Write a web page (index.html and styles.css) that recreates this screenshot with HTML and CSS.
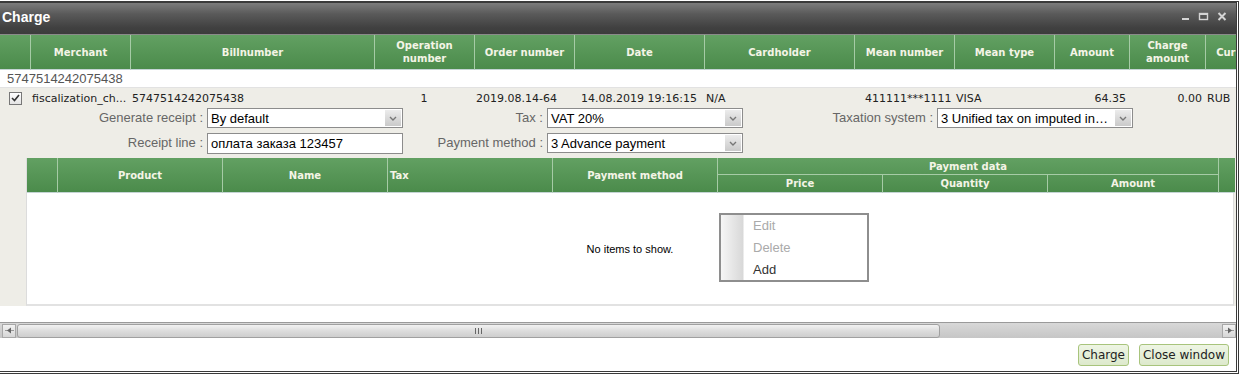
FILE: index.html
```html
<!DOCTYPE html>
<html lang="en">
<head>
    <meta charset="UTF-8">
    <meta name="viewport" content="width=device-width, initial-scale=1.0">
    <title>Charge</title>
    <link rel="stylesheet" href="styles.css">
</head>
<body>
<div class="window">
    <div class="titlebar">
        <span class="title">Charge</span>
        <div class="tools">
            <svg width="9" height="9" viewBox="0 0 9 9"><rect x="1" y="6" width="7" height="2" fill="#d4d4d4"/></svg>
            <svg width="11" height="9" viewBox="0 0 11 9"><rect x="1.5" y="1.5" width="8" height="6" fill="none" stroke="#d4d4d4" stroke-width="1.4"/><rect x="1" y="1" width="9" height="2" fill="#d4d4d4"/></svg>
            <svg width="10" height="9" viewBox="0 0 10 9"><path d="M1.5 1 L8.5 8 M8.5 1 L1.5 8" stroke="#d4d4d4" stroke-width="2"/></svg>
        </div>
    </div>

    <div class="grid-wrap">
        <table class="grid">
            <colgroup>
                <col class="w30"><col class="w100"><col class="w244"><col class="w100"><col class="w100"><col class="w130">
                <col class="w150"><col class="w100"><col class="w100"><col class="w75"><col class="w76"><col class="w72">
            </colgroup>
            <thead>
                <tr>
                    <th class="first"></th>
                    <th>Merchant</th>
                    <th>Billnumber</th>
                    <th>Operation<br>number</th>
                    <th>Order number</th>
                    <th>Date</th>
                    <th>Cardholder</th>
                    <th>Mean number</th>
                    <th>Mean type</th>
                    <th>Amount</th>
                    <th>Charge<br>amount</th>
                    <th>Currency</th>
                </tr>
            </thead>
            <tbody>
                <tr class="group-row">
                    <td colspan="12">5747514242075438</td>
                </tr>
                <tr class="data-row">
                    <td><span class="checkbox"><svg width="9" height="8" viewBox="0 0 9 8"><path d="M1 4 L3.5 6.5 L8 1" fill="none" stroke="#333" stroke-width="1.6"/></svg></span></td>
                    <td>fiscalization_ch...</td>
                    <td>5747514242075438</td>
                    <td class="center">1</td>
                    <td>2019.08.14-64</td>
                    <td class="center">14.08.2019 19:16:15</td>
                    <td>N/A</td>
                    <td class="mean">411111***1111</td>
                    <td>VISA</td>
                    <td class="num">64.35</td>
                    <td class="num">0.00</td>
                    <td>RUB</td>
                </tr>
            </tbody>
        </table>
    </div>

    <div class="detail">
        <div class="form">
            <label class="lbl">Generate receipt :</label>
            <div class="combo"><span>By default</span><span class="arrow"><svg width="8" height="5" viewBox="0 0 8 5"><path d="M1 1 L4 4 L7 1" fill="none" stroke="#777" stroke-width="1.4"/></svg></span></div>
            <label class="lbl">Tax :</label>
            <div class="combo"><span>VAT 20%</span><span class="arrow"><svg width="8" height="5" viewBox="0 0 8 5"><path d="M1 1 L4 4 L7 1" fill="none" stroke="#777" stroke-width="1.4"/></svg></span></div>
            <label class="lbl">Taxation system :</label>
            <div class="combo"><span>3 Unified tax on imputed in…</span><span class="arrow"><svg width="8" height="5" viewBox="0 0 8 5"><path d="M1 1 L4 4 L7 1" fill="none" stroke="#777" stroke-width="1.4"/></svg></span></div>

            <label class="lbl">Receipt line :</label>
            <input class="text" type="text" value="оплата заказа 123457">
            <label class="lbl">Payment method :</label>
            <div class="combo"><span>3 Advance payment</span><span class="arrow"><svg width="8" height="5" viewBox="0 0 8 5"><path d="M1 1 L4 4 L7 1" fill="none" stroke="#777" stroke-width="1.4"/></svg></span></div>
        </div>

        <div class="items">
            <table class="grid items-grid">
                <colgroup>
                    <col class="w30"><col class="w165"><col class="w165"><col class="w165"><col class="w165">
                    <col class="w165"><col class="w165"><col class="w171"><col class="w17">
                </colgroup>
                <thead>
                    <tr>
                        <th class="first" rowspan="2"></th>
                        <th rowspan="2">Product</th>
                        <th rowspan="2">Name</th>
                        <th rowspan="2" class="left">Tax</th>
                        <th rowspan="2">Payment method</th>
                        <th colspan="3" class="group">Payment data</th>
                        <th rowspan="2"></th>
                    </tr>
                    <tr>
                        <th class="sub">Price</th>
                        <th class="sub">Quantity</th>
                        <th class="sub">Amount</th>
                    </tr>
                </thead>
            </table>
            <div class="items-body">
                <span class="empty">No items to show.</span>
                <ul class="menu">
                    <li class="disabled">Edit</li>
                    <li class="disabled">Delete</li>
                    <li>Add</li>
                </ul>
            </div>
        </div>
    </div>

    <div class="gap"></div>

    <div class="hscroll">
        <span class="sbtn">
            <svg width="11" height="9" viewBox="0 0 11 9"><path d="M1 4.5 H10" stroke="#999"/><path d="M3 4.5 L7 1.5 L7 7.5 Z" fill="#666"/></svg>
        </span>
        <div class="thumb"><span class="grip"></span></div>
        <div class="track"></div>
        <span class="sbtn">
            <svg width="11" height="9" viewBox="0 0 11 9"><path d="M1 4.5 H10" stroke="#999"/><path d="M8 4.5 L4 1.5 L4 7.5 Z" fill="#666"/></svg>
        </span>
    </div>

    <div class="footer">
        <button class="btn">Charge</button>
        <button class="btn">Close window</button>
    </div>
</div>
</body>
</html>
```

FILE: styles.css
```css
body {
    margin: 0;
    padding-top: 1px;
    background: #fff;
    font-family: "DejaVu Sans", Verdana, sans-serif;
    font-size: 11px;
    color: #222;
}

.window {
    width: 1236px;
    border-top: 2px solid #3a3a3a;
    border-right: 3px double #3a3a3a;
    border-bottom: 3px double #3a3a3a;
    background: #fff;
    overflow: hidden;
}

/* title bar */
.titlebar {
    height: 32px;
    display: flex;
    align-items: center;
    justify-content: space-between;
    background: linear-gradient(#7c7c7c, #5a5a5a 35%, #404040 80%, #3c3c3c);
    border-bottom: 1px solid #8a8a8a;
    box-sizing: border-box;
}

.title {
    padding-left: 2px;
    padding-bottom: 3px;
    font-family: "Liberation Sans", Arial, sans-serif;
    font-weight: bold;
    font-size: 14px;
    color: #fff;
}

.tools {
    display: flex;
    align-items: center;
    gap: 8px;
    padding-right: 9px;
    padding-bottom: 4px;
}

/* grids */
.grid-wrap {
    width: 1236px;
    overflow: hidden;
}

.grid {
    table-layout: fixed;
    border-collapse: separate;
    border-spacing: 0;
    width: 1277px;
}

.w17 { width: 17px; }
.w30 { width: 30px; }
.w72 { width: 72px; }
.w75 { width: 75px; }
.w76 { width: 76px; }
.w100 { width: 100px; }
.w130 { width: 130px; }
.w150 { width: 150px; }
.w165 { width: 165px; }
.w171 { width: 171px; }
.w244 { width: 244px; }

.grid th {
    height: 35px;
    padding: 0 2px;
    background: linear-gradient(#62a062, #4b8b4b);
    border-left: 1px solid #a6cba6;
    border-bottom: 1px solid #c4d4d4;
    color: #f4f4e6;
    font-size: 10px;
    font-weight: bold;
    line-height: 13px;
    text-align: center;
    white-space: nowrap;
    overflow: hidden;
    box-sizing: border-box;
}

.grid th.first {
    border-left: none;
}

.grid th.left {
    text-align: left;
}

.group-row td {
    height: 18px;
    padding: 0 0 0 7px;
    font-family: "Liberation Sans", Arial, sans-serif;
    font-size: 13px;
    color: #555;
    border-bottom: 1px solid #e2e2e2;
    box-sizing: border-box;
}

.data-row td {
    height: 19px;
    padding: 1px 2px 0;
    background: #eeede7;
    white-space: nowrap;
    overflow: hidden;
    box-sizing: border-box;
}

.data-row .center { text-align: center; }
.data-row .num { text-align: right; padding-right: 3px; }
.data-row .mean { padding-left: 11px; }

.checkbox {
    display: flex;
    align-items: center;
    justify-content: center;
    width: 11px;
    height: 11px;
    margin-left: 7px;
    border: 1px solid #777;
    background: linear-gradient(#fff, #e4e4e4);
}

/* detail form */
.detail {
    background: #eeede7;
    padding-bottom: 0;
}

.form {
    display: grid;
    grid-template-columns: 207px 196px 144px 196px 194px 196px;
    grid-template-rows: 21px 21px;
    row-gap: 4px;
    padding: 1px 0 4px;
    font-family: "Liberation Sans", Arial, sans-serif;
    font-size: 13px;
}

.lbl {
    padding-right: 4px;
    line-height: 20px;
    text-align: right;
    color: #666;
}

.combo {
    display: flex;
    align-items: center;
    justify-content: space-between;
    height: 20px;
    border: 1px solid #8c8c8c;
    background: #fff;
    box-sizing: border-box;
    color: #000;
}

.combo span:first-child {
    padding-left: 3px;
    white-space: nowrap;
}

.arrow {
    display: flex;
    align-items: center;
    justify-content: center;
    width: 16px;
    height: 16px;
    margin-right: 1px;
    background: linear-gradient(#ececec, #cacaca);
}

.text {
    height: 21px;
    margin: 0;
    padding: 0 3px;
    border: 1px solid #8c8c8c;
    box-sizing: border-box;
    font-family: "Liberation Sans", Arial, sans-serif;
    font-size: 13px;
    color: #000;
    outline: none;
}

/* item grid */
.items {
    margin-left: 26px;
    width: 1208px;
    border-left: 1px solid #dcdcdc;
    border-right: 1px solid #dcdcdc;
    border-bottom: 2px solid #e2e2e2;
    box-sizing: border-box;
}

.items-grid {
    width: 1207px;
}

.items-grid th {
    height: 18px;
}

.items-grid th.group {
    height: 17px;
    border-bottom: 1px solid #a6cba6;
    background: linear-gradient(#62a062, #579657);
}

.items-grid th.sub {
    background: linear-gradient(#579657, #4b8b4b);
}

.items-body {
    position: relative;
    height: 111px;
    display: flex;
    align-items: center;
    justify-content: center;
    background: #fff;
}

.empty {
    font-family: "Liberation Sans", Arial, sans-serif;
    font-size: 11px;
    color: #000;
}

.menu {
    position: absolute;
    left: 692px;
    top: 20px;
    width: 150px;
    height: 69px;
    margin: 0;
    padding: 0;
    list-style: none;
    border: 2px solid #8e8e8e;
    box-sizing: border-box;
    background: linear-gradient(90deg, #f6f6f6, #d8d8d8 22px, #fff 23px);
    font-family: "Liberation Sans", Arial, sans-serif;
    font-size: 13px;
}

.menu li {
    height: 22px;
    line-height: 21px;
    padding-left: 32px;
    color: #333;
}

.menu li.disabled {
    color: #aaa;
}

.gap {
    height: 16px;
}

/* horizontal scrollbar */
.hscroll {
    display: flex;
    align-items: center;
    height: 16px;
    padding-left: 2px;
    background: linear-gradient(#d8d8d8, #cfcfcf 50%, #c6c6c6);
    border-top: 1px solid #9a9a9a;
    box-sizing: border-box;
}

.sbtn {
    display: flex;
    align-items: center;
    justify-content: center;
    width: 14px;
    height: 14px;
    border: 1px solid #a8a8a8;
    background: linear-gradient(#f2f2f2, #d6d6d6);
    box-sizing: border-box;
}

.thumb {
    display: flex;
    align-items: center;
    justify-content: center;
    width: 923px;
    height: 14px;
    margin-left: 1px;
    border: 1px solid #a0a0a0;
    border-radius: 3px;
    background: linear-gradient(#f2f2f2, #dcdcdc 50%, #cecece);
    box-sizing: border-box;
}

.grip {
    width: 7px;
    height: 6px;
    background: repeating-linear-gradient(90deg, #666 0 1px, transparent 1px 3px);
}

.track {
    flex: 1;
}

/* footer */
.footer {
    display: flex;
    justify-content: flex-end;
    gap: 10px;
    height: 33px;
    padding: 6px 7px 0 0;
    box-sizing: border-box;
}

.btn {
    height: 22px;
    padding: 0 3px;
    border: 1px solid #a8c47c;
    border-radius: 3px;
    background: linear-gradient(#eef5e4, #dde9cc);
    font-family: "DejaVu Sans", Verdana, sans-serif;
    font-size: 12px;
    color: #222;
    cursor: pointer;
}

.btn:hover {
    background: #d4e4bc;
}
```
